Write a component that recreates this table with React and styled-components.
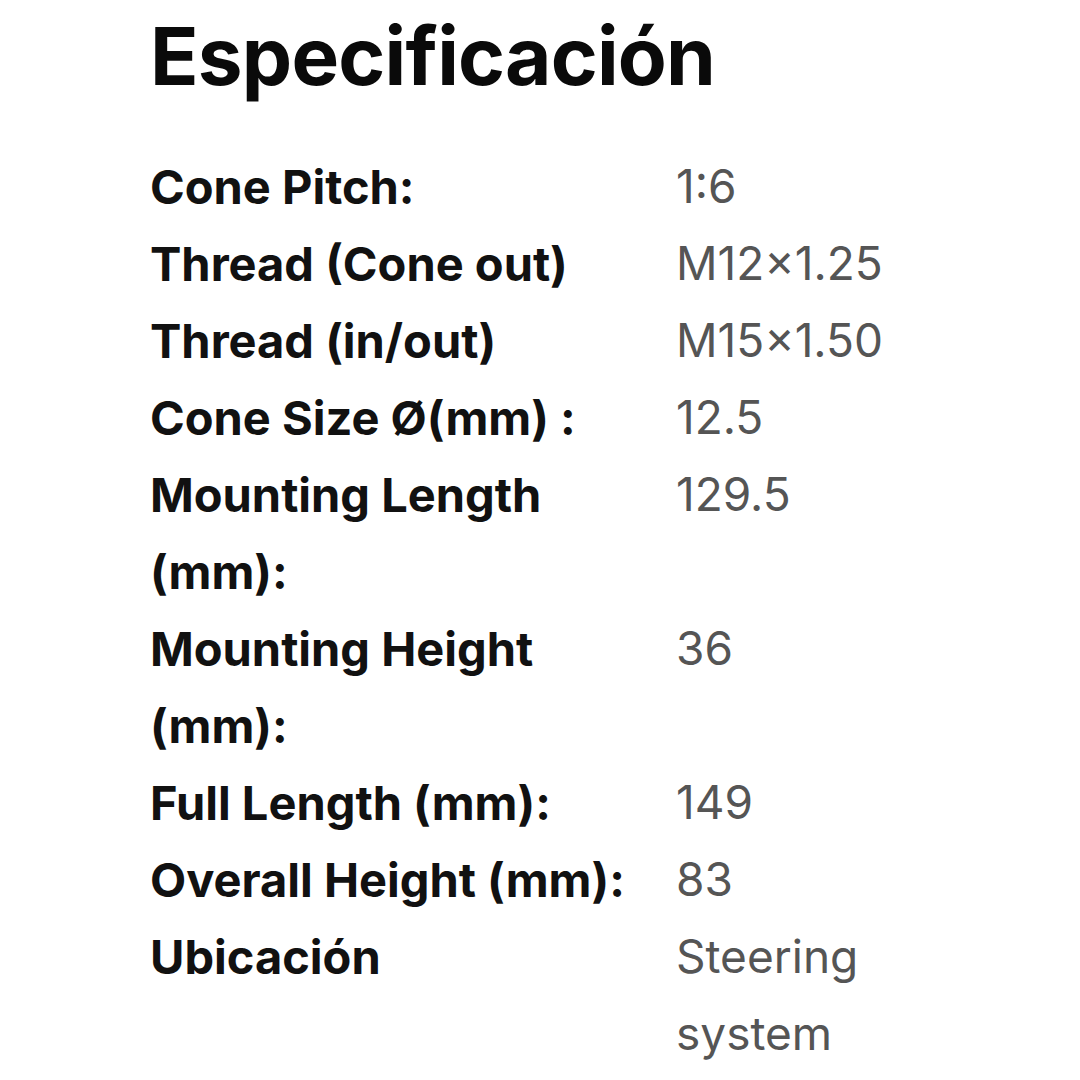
import React from "react";
import styled, { createGlobalStyle } from "styled-components";

const Global = createGlobalStyle`
  html, body {
    margin: 0;
    padding: 0;
    background: #ffffff;
  }
  body {
    font-family: Inter, "Noto Sans", sans-serif;
  }
`;

const Page = styled.div`
  width: 1080px;
  height: 1080px;
  overflow: hidden;
  padding: 0 0 0 150px;
  box-sizing: border-box;
`;

const Title = styled.h1`
  margin: 0;
  padding-top: 8px;
  font-size: 80px;
  line-height: 96px;
  font-weight: 700;
  color: #0a0a0a;
  letter-spacing: -0.8px;
`;

const Specs = styled.div`
  display: grid;
  grid-template-columns: 526px 360px;
  margin-top: 44px;
`;

const Label = styled.div`
  font-size: 47px;
  line-height: 77px;
  font-weight: 700;
  color: #111111;
  letter-spacing: 0;
  padding-right: 28px;
`;

const Value = styled.div`
  font-size: 46px;
  line-height: 77px;
  font-weight: 400;
  color: #555555;
  letter-spacing: 0;
  width: ${(p) => (p.$narrow ? "200px" : "auto")};
`;

const rows = [
  ["Cone Pitch:", "1:6"],
  ["Thread (Cone out)", "M12×1.25"],
  ["Thread (in/out)", "M15×1.50"],
  ["Cone Size Ø(mm) :", "12.5"],
  ["Mounting Length (mm):", "129.5"],
  ["Mounting Height (mm):", "36"],
  ["Full Length (mm):", "149"],
  ["Overall Height (mm):", "83"],
  ["Ubicación", "Steering system", true],
];

export default function App() {
  return (
    <Page>
      <Global />
      <Title>Especificación</Title>
      <Specs>
        {rows.map(([label, value, narrow]) => (
          <React.Fragment key={label}>
            <Label>{label}</Label>
            <Value $narrow={narrow}>{value}</Value>
          </React.Fragment>
        ))}
      </Specs>
    </Page>
  );
}
